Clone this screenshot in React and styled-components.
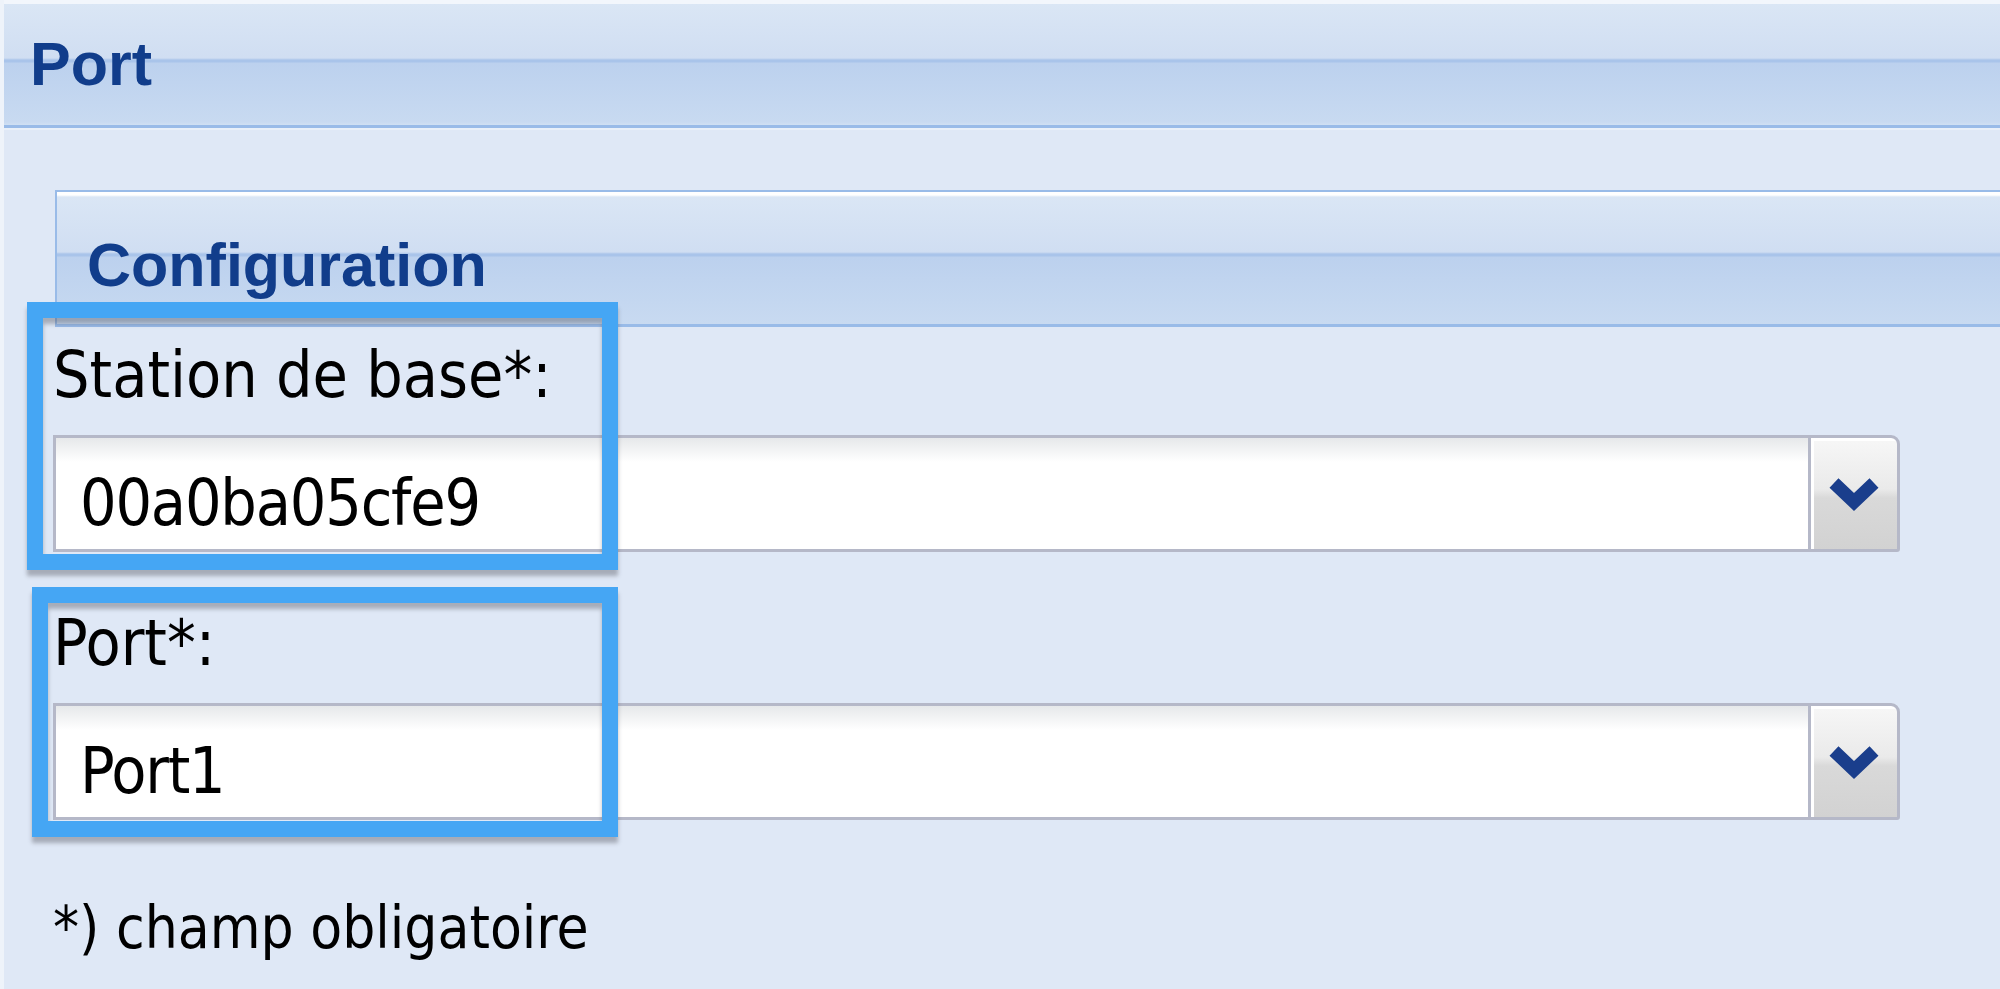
import React from 'react';
import styled, { createGlobalStyle } from 'styled-components';

const GlobalStyle = createGlobalStyle`
  html, body {
    margin: 0;
    padding: 0;
  }
  body {
    background: #dfe8f6;
    overflow: hidden;
  }
`;

const Page = styled.div`
  width: 2000px;
  height: 989px;
  box-sizing: border-box;
  border-left: 4px solid #eef3fa;
  background: #dfe8f6;
  overflow: hidden;
`;

const PanelHeader = styled.div`
  height: 128px;
  box-sizing: border-box;
  border-top: 4px solid #f2f6fc;
  border-bottom: 3px solid #99bbe8;
  padding: 20px 0 0 26px;
  background: linear-gradient(
    to bottom,
    #dae6f5 0,
    #d0def2 54px,
    #a9c4ea 56px,
    #a9c4ea 58px,
    #bcd1ee 59px,
    #c8daf1 118px,
    #d0e0f3 121px
  );
`;

const Title = styled.div`
  font-family: 'Liberation Sans', Arial, sans-serif;
  font-weight: bold;
  font-size: 61px;
  line-height: 80px;
  color: #113d8b;
`;

const PanelBody = styled.div`
  border-top: 2px solid #e9f0f9;
  padding: 60px 100px 0 49px;
`;

const FieldsetHeader = styled.div`
  height: 137px;
  box-sizing: border-box;
  margin: 0 -100px 0 2px;
  border-top: 2px solid #99bbe8;
  border-left: 2px solid #99bbe8;
  border-bottom: 3px solid #99bbe8;
  padding: 33px 0 0 30px;
  background: linear-gradient(
    to bottom,
    #ffffff 0,
    #ffffff 3px,
    #dae6f5 5px,
    #d0def2 60px,
    #a9c4ea 62px,
    #a9c4ea 64px,
    #bcd1ee 65px,
    #c8daf1 132px
  );
`;

const Legend = styled(Title)``;

const Form = styled.div`
  padding-top: 8px;
`;

const Field = styled.div`
  position: relative;
  margin-bottom: ${(p) => p.$gap}px;
`;

const Label = styled.div`
  font-family: 'DejaVu Sans Condensed', 'DejaVu Sans', Tahoma, sans-serif;
  font-stretch: condensed;
  font-size: 64px;
  line-height: 80px;
  height: 80px;
  margin-bottom: 20px;
  color: #000;
`;

const Combo = styled.div`
  display: flex;
  height: 117px;
`;

const Input = styled.div`
  flex: 1;
  box-sizing: border-box;
  border: 3px solid #b5b8c8;
  border-right: none;
  padding: 25px 0 0 24px;
  background: linear-gradient(to bottom, #e6e8ea 0, #ffffff 24px, #ffffff 100%);
  font-family: 'DejaVu Sans Condensed', 'DejaVu Sans', Tahoma, sans-serif;
  font-stretch: condensed;
  font-size: 64px;
  line-height: 80px;
  letter-spacing: -1.2px;
  color: #000;
`;

const Trigger = styled.div`
  width: 92px;
  box-sizing: border-box;
  border: 3px solid #b5b8c8;
  border-top-right-radius: 9px;
  border-bottom-right-radius: 3px;
  background: linear-gradient(
    to bottom,
    #f7f7f7 0,
    #eaeaea 46%,
    #d9d9d9 54%,
    #d2d2d2 100%
  );
  box-shadow: inset 3px 3px 0 #ffffff;
  display: flex;
  align-items: center;
  justify-content: center;
`;

const Highlight = styled.div`
  position: absolute;
  z-index: 2;
  left: ${(p) => p.$left}px;
  top: ${(p) => p.$top}px;
  width: ${(p) => p.$w}px;
  height: ${(p) => p.$h}px;
  box-sizing: border-box;
  border: 16px solid #45a6f4;
  box-shadow: 0 6px 4px rgba(60, 60, 70, 0.35),
    inset 0 6px 4px rgba(60, 60, 70, 0.35);
  pointer-events: none;
`;

const Note = styled.div`
  font-family: 'DejaVu Sans Condensed', 'DejaVu Sans', Tahoma, sans-serif;
  font-stretch: condensed;
  font-size: 58px;
  line-height: 80px;
  color: #000;
`;

const Chevron = () => (
  <svg width="52" height="34" viewBox="0 0 52 34">
    <polyline
      points="6,6 26,25 46,6"
      fill="none"
      stroke="#1a3e8c"
      strokeWidth="13"
      strokeLinejoin="miter"
    />
  </svg>
);

const ComboField = ({ label, value, gap, box }) => (
  <Field $gap={gap}>
    <Label>{label}</Label>
    <Combo>
      <Input>{value}</Input>
      <Trigger>
        <Chevron />
      </Trigger>
    </Combo>
    <Highlight $left={box.left} $top={box.top} $w={box.w} $h={box.h} />
  </Field>
);

const App = () => {
  return (
    <>
      <GlobalStyle />
      <Page>
        <PanelHeader>
          <Title>Port</Title>
        </PanelHeader>
        <PanelBody>
          <FieldsetHeader>
            <Legend>Configuration</Legend>
          </FieldsetHeader>
          <Form>
            <ComboField
              label="Station de base*:"
              value="00a0ba05cfe9"
              gap={51}
              box={{ left: -26, top: -33, w: 591, h: 268 }}
            />
            <ComboField
              label="Port*:"
              value="Port1"
              gap={68}
              box={{ left: -21, top: -16, w: 586, h: 250 }}
            />
            <Note>*) champ obligatoire</Note>
          </Form>
        </PanelBody>
      </Page>
    </>
  );
};

export default App;
